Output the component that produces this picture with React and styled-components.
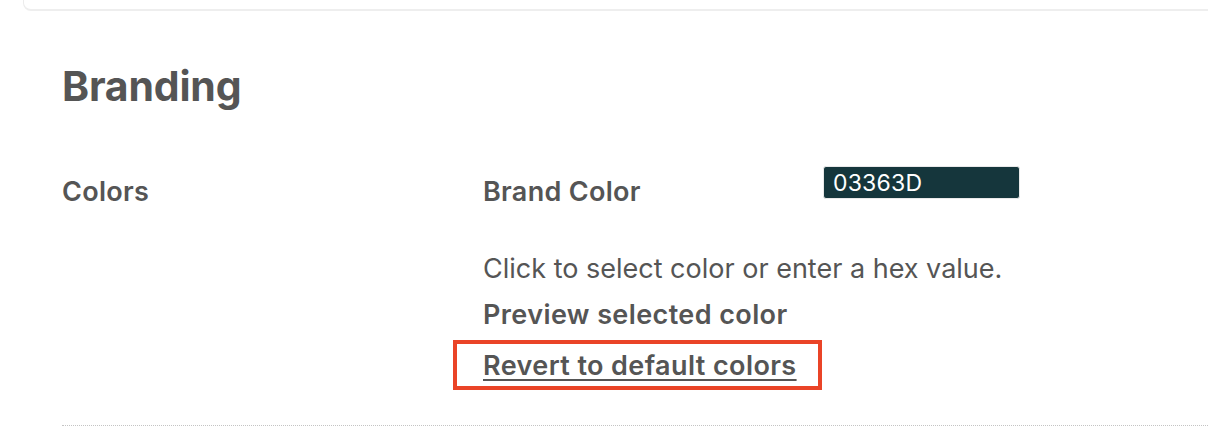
import React from 'react'
import styled, { createGlobalStyle } from 'styled-components'

const GlobalStyle = createGlobalStyle`
  html, body {
    margin: 0;
    padding: 0;
    background: #ffffff;
    overflow: hidden;
  }
  body {
    font-family: Inter, "Liberation Sans", sans-serif;
    color: #555555;
  }
`

const Page = styled.div`
  width: 1208px;
  height: 436px;
  overflow: hidden;
`

const PrevCard = styled.div`
  margin-left: 23px;
  height: 9px;
  border: 1px solid #ececec;
  border-top: none;
  border-right: none;
  border-bottom: 2px solid #eeeeee;
  border-bottom-left-radius: 8px;
`

const Section = styled.section`
  padding: 50px 0 0 62px;
`

const Title = styled.h1`
  margin: 0;
  font-size: 41px;
  font-weight: 700;
  letter-spacing: -0.2px;
  line-height: 50px;
  color: #555555;
`

const Grid = styled.div`
  display: grid;
  grid-template-columns: 421px 1fr;
  margin-top: 65px;
  padding-bottom: 35px;
  border-bottom: 1px dotted #c4c4c4;
`

const Label = styled.div`
  font-size: 27px;
  font-weight: 600;
  letter-spacing: 0.3px;
  line-height: 32px;
`

const Fields = styled.div`
  display: flex;
  flex-direction: column;
`

const FieldRow = styled.div`
  display: flex;
  align-items: flex-start;
`

const FieldLabel = styled(Label)`
  width: 340px;
`

const HexInput = styled.input`
  width: 197px;
  height: 33px;
  box-sizing: border-box;
  margin-top: -10px;
  padding: 0 8px 0 9px;
  border: 1px solid #e9e9e9;
  border-radius: 3px;
  background: #15363c;
  color: #ffffff;
  font-family: Inter, "Liberation Sans", sans-serif;
  font-size: 23px;
  letter-spacing: 0.2px;
  outline: none;
`

const Help = styled.p`
  margin: 45px 0 0;
  font-size: 27px;
  font-weight: 400;
  line-height: 32px;
`

const Strong = styled.div`
  margin-top: 14px;
  font-size: 27px;
  font-weight: 600;
  letter-spacing: 0.4px;
  line-height: 32px;
`

const Highlight = styled.div`
  align-self: flex-start;
  margin: 9px 0 0 -30px;
  padding: 6px 21px 4px 26px;
  border: 4px solid #ea4427;
`

const RevertLink = styled.a`
  font-size: 27px;
  font-weight: 600;
  letter-spacing: 0.4px;
  line-height: 32px;
  color: #555555;
  text-decoration: underline;
  text-underline-offset: 4px;
  text-decoration-thickness: 2px;
  cursor: pointer;
`

export default function App() {
  return (
    <Page>
      <GlobalStyle />
      <PrevCard />
      <Section>
        <Title>Branding</Title>
        <Grid>
          <Label>Colors</Label>
          <Fields>
            <FieldRow>
              <FieldLabel>Brand Color</FieldLabel>
              <HexInput defaultValue="03363D" />
            </FieldRow>
            <Help>Click to select color or enter a hex value.</Help>
            <Strong>Preview selected color</Strong>
            <Highlight>
              <RevertLink>Revert to default colors</RevertLink>
            </Highlight>
          </Fields>
        </Grid>
      </Section>
    </Page>
  )
}
